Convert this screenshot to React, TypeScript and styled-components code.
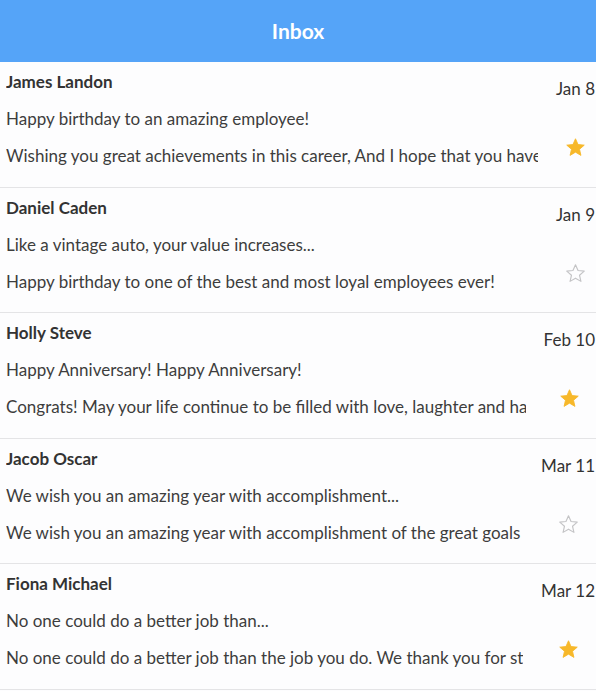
import React from 'react';
import styled, { createGlobalStyle } from 'styled-components';

const GlobalStyle = createGlobalStyle`
    html, body {
        margin: 0;
        padding: 0;
        background: #fdfdfe;
        font-family: Lato, "Open Sans", sans-serif;
    }
`;

const Page = styled.div`
    width: 100%;
    display: flex;
    flex-direction: column;
`;

const Header = styled.header`
    height: 62px;
    padding-bottom: 1px;
    box-sizing: border-box;
    background: #55a4f8;
    display: flex;
    align-items: center;
    justify-content: center;
    color: #ffffff;
    font-size: 21px;
    font-weight: 700;
`;

const List = styled.ul`
    list-style: none;
    margin: 0;
    padding: 0;
`;

const Row = styled.li`
    height: 125.5px;
    box-sizing: border-box;
    display: flex;
    gap: 18px;
    padding: 0 1px 0 6px;
    border-bottom: 1px solid #e4e4e6;
    background: #fdfdfe;
`;

const Body = styled.div`
    flex: 1;
    min-width: 0;
    overflow: hidden;
    display: flex;
    flex-direction: column;
    padding-top: 8px;
`;

const Sender = styled.div`
    font-size: 17px;
    line-height: 24px;
    font-weight: 700;
    color: #333333;
    white-space: nowrap;
`;

const Line = styled.div`
    font-size: 17px;
    line-height: 24px;
    color: #3d3d3d;
    white-space: nowrap;
    margin-top: 13px;
`;

const Side = styled.div`
    min-width: 39px;
    display: flex;
    flex-direction: column;
    padding-top: 15px;
`;

const Date = styled.div`
    font-size: 17px;
    line-height: 24px;
    color: #333333;
    white-space: nowrap;
`;

const StarBox = styled.div`
    margin-top: 36px;
    align-self: center;
    width: 21px;
    height: 21px;
`;

const Star: React.FC<{ filled: boolean }> = ({ filled }) => (
    <StarBox>
        <svg width="21" height="21" viewBox="0 0 24 24">
            <polygon
                points="12,2 14.9,8.6 22,9.3 16.6,14 18.2,21 12,17.3 5.8,21 7.4,14 2,9.3 9.1,8.6"
                fill={filled ? '#f7b82a' : 'none'}
                stroke={filled ? '#f7b82a' : '#c4c4c6'}
                strokeWidth={filled ? 1 : 1.3}
                strokeLinejoin="round"
            />
        </svg>
    </StarBox>
);

const mails = [
    {
        from: 'James Landon',
        subject: 'Happy birthday to an amazing employee!',
        text: 'Wishing you great achievements in this career, And I hope that you have a great year ahead.',
        date: 'Jan 8',
        starred: true,
    },
    {
        from: 'Daniel Caden',
        subject: 'Like a vintage auto, your value increases...',
        text: 'Happy birthday to one of the best and most loyal employees ever!',
        date: 'Jan 9',
        starred: false,
    },
    {
        from: 'Holly Steve',
        subject: 'Happy Anniversary! Happy Anniversary!',
        text: 'Congrats! May your life continue to be filled with love, laughter and happiness.',
        date: 'Feb 10',
        starred: true,
    },
    {
        from: 'Jacob Oscar',
        subject: 'We wish you an amazing year with accomplishment...',
        text: 'We wish you an amazing year with accomplishment of the great goals',
        date: 'Mar 11',
        starred: false,
    },
    {
        from: 'Fiona Michael',
        subject: 'No one could do a better job than...',
        text: 'No one could do a better job than the job you do. We thank you for sticking with us.',
        date: 'Mar 12',
        starred: true,
    },
];

const App: React.FC = () => {
    return (
        <Page>
            <GlobalStyle />
            <Header>Inbox</Header>
            <List>
                {mails.map((mail) => (
                    <Row key={mail.from}>
                        <Body>
                            <Sender>{mail.from}</Sender>
                            <Line>{mail.subject}</Line>
                            <Line>{mail.text}</Line>
                        </Body>
                        <Side>
                            <Date>{mail.date}</Date>
                            <Star filled={mail.starred} />
                        </Side>
                    </Row>
                ))}
            </List>
        </Page>
    );
};

export default App;
